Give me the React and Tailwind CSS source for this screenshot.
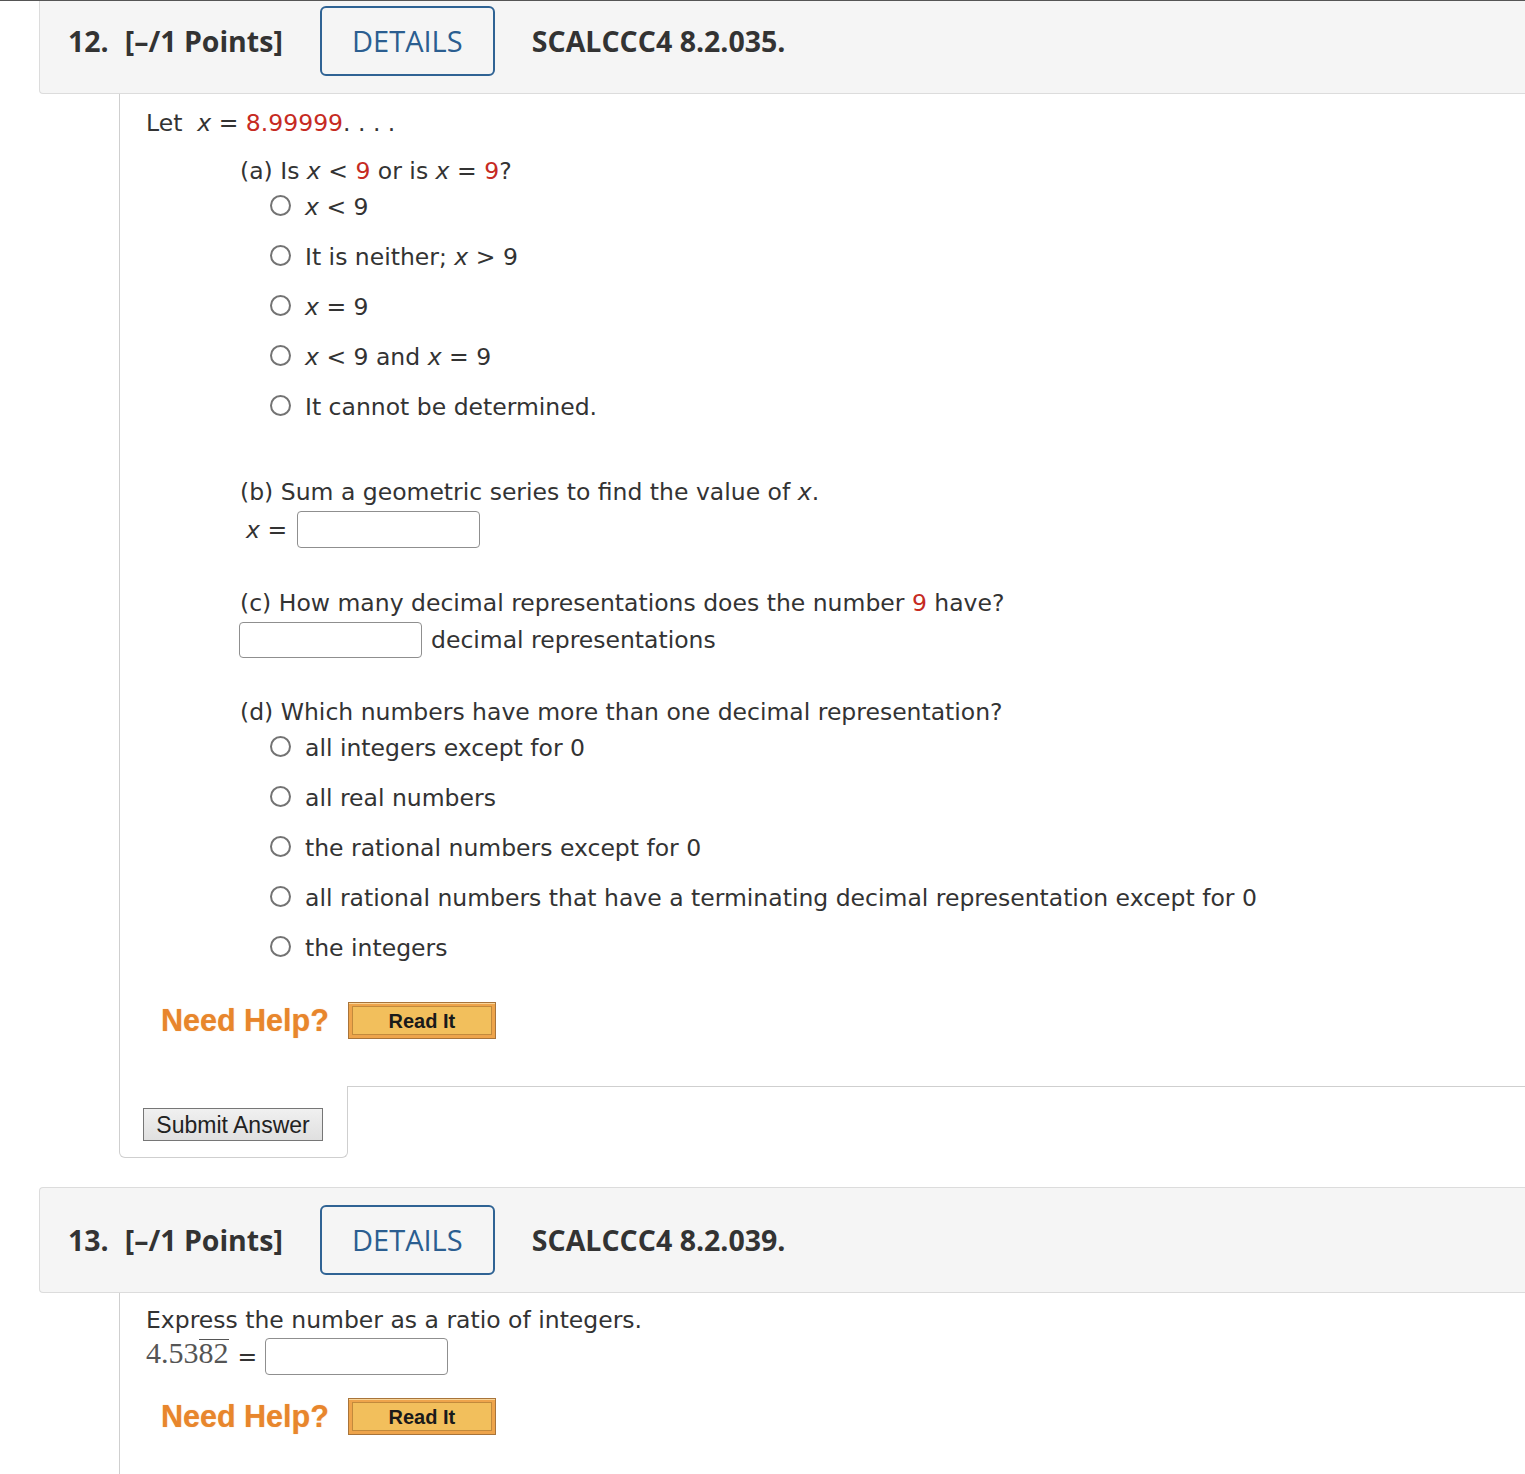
import React from 'react';

const body = { fontFamily: '"DejaVu Sans", Verdana, sans-serif' };
const head = { fontFamily: '"Open Sans", sans-serif' };
const arial = { fontFamily: '"Liberation Sans", Arial, sans-serif' };

const Red = ({ children }) => <span className="text-[#c62a22]">{children}</span>;
const X = () => <i>x</i>;

const Radio = ({ children }) => (
  <div className="flex items-center h-[28px] mt-[22px] first:mt-0">
    <span className="w-[21px] h-[21px] rounded-full border-2 border-[#737373] bg-white mr-[14px] mb-[4px] shrink-0" />
    <span>{children}</span>
  </div>
);

const Input = ({ w = 'w-[183px]', h = 'h-[37px]' }) => (
  <span className={`inline-block ${w} ${h} border border-[#8f8f8f] rounded-[4px] bg-white`} />
);

const Header = ({ num, code, first }) => (
  <div
    className={`ml-[39px] flex items-center bg-[#f5f5f5] border-[#dcdcdc] ${
      first ? 'h-[93px] border-l border-b rounded-bl-[4px] items-start pt-[5px]' : 'h-[106px] border border-r-0 rounded-l-[4px]'
    }`}
    style={head}
  >
    <div className="flex items-center h-[70px] pl-[28px] text-[28.5px] font-bold text-[#333]">
      <span>{num}</span>
      <span className="ml-[16px]">[–/1 Points]</span>
      <span className="ml-[37px] w-[175px] h-[70px] flex items-center justify-center border-[2.5px] border-[#2f6394] rounded-[6px] text-[#2b5e90] font-medium text-[29px]">
        DETAILS
      </span>
      <span className="ml-[37px]">{code}</span>
    </div>
  </div>
);

const NeedHelp = () => (
  <div className="flex items-center h-[37px] ml-[15px]">
    <span className="text-[30.5px] font-bold text-[#e8862c] leading-none" style={{ ...arial, textShadow: '0 0 1px rgba(232,134,44,0.6)' }}>
      Need Help?
    </span>
    <span className="ml-[19px] w-[148px] h-[37px] border border-[#a8743a] bg-[#eea44b] p-[3px] shadow-[inset_0_1px_0_#f8d59a]">
      <span className="flex items-center justify-center w-full h-full border border-[#c28a3c] bg-[#f2bf5c] text-[20px] font-bold text-[#1a1a1a]" style={arial}>
        Read It
      </span>
    </span>
  </div>
);

export default function App() {
  return (
    <div className="w-[1525px] min-h-[1474px] bg-white overflow-hidden text-[#333] text-[23.5px] leading-[28px]" style={body}>
      <div className="h-px bg-[#555]" />
      <Header num="12." code="SCALCCC4 8.2.035." first />

      <div className="ml-[119px] border-l border-[#cfcfcf] pl-[26px] pt-[15px] pb-[47px]">
        <div>
          Let&nbsp; <X /> = <Red>8.99999</Red>. . . .
        </div>

        <div className="ml-[94px] mt-[20px]">
          (a) Is <X /> &lt; <Red>9</Red> or is <X /> = <Red>9</Red>?
        </div>
        <div className="ml-[124px] mt-[8px]">
          <Radio><X /> &lt; 9</Radio>
          <Radio>It is neither; <X /> &gt; 9</Radio>
          <Radio><X /> = 9</Radio>
          <Radio><X /> &lt; 9 and <X /> = 9</Radio>
          <Radio>It cannot be determined.</Radio>
        </div>

        <div className="ml-[94px] mt-[57px]">
          (b) Sum a geometric series to find the value of <X />.
        </div>
        <div className="ml-[100px] mt-[5px] flex items-center gap-[10px]">
          <span><X /> =</span>
          <Input />
        </div>

        <div className="ml-[94px] mt-[41px]">
          (c) How many decimal representations does the number <Red>9</Red> have?
        </div>
        <div className="ml-[93px] mt-[5px] flex items-center gap-[9px]">
          <Input h="h-[36px]" />
          <span>decimal representations</span>
        </div>

        <div className="ml-[94px] mt-[40px]">
          (d) Which numbers have more than one decimal representation?
        </div>
        <div className="ml-[124px] mt-[8px]">
          <Radio>all integers except for 0</Radio>
          <Radio>all real numbers</Radio>
          <Radio>the rational numbers except for 0</Radio>
          <Radio>all rational numbers that have a terminating decimal representation except for 0</Radio>
          <Radio>the integers</Radio>
        </div>

        <div className="mt-[40px]">
          <NeedHelp />
        </div>
      </div>

      <div className="flex">
        <div className="ml-[119px] w-[229px] h-[72px] border-l border-r border-b border-[#cfcfcf] rounded-b-[6px] pl-[23px] pt-[22px]">
          <span
            className="inline-flex items-center justify-center w-[180px] h-[33px] border border-[#767676] bg-gradient-to-b from-[#f0f0f0] to-[#e0e0e0] text-[23px] text-[#222]"
            style={arial}
          >
            Submit Answer
          </span>
        </div>
        <div className="flex-1 border-t border-[#cfcfcf]" />
      </div>

      <div className="mt-[29px]">
        <Header num="13." code="SCALCCC4 8.2.039." />
      </div>

      <div className="ml-[119px] border-l border-[#cfcfcf] pl-[26px] pt-[13px] pb-[60px]">
        <div>Express the number as a ratio of integers.</div>
        <div className="mt-[4px] flex items-start">
          <span className="text-[30px] text-[#555] leading-[30px]" style={{ fontFamily: '"Liberation Serif", "Times New Roman", serif' }}>
            4.53<span className="border-t-[1.5px] border-[#555] leading-[26px] inline-block">82</span>
          </span>
          <span className="ml-[9px] mt-[5px]">=</span>
          <span className="ml-[8px] flex"><Input /></span>
        </div>
        <div className="mt-[23px]">
          <NeedHelp />
        </div>
      </div>
    </div>
  );
}
